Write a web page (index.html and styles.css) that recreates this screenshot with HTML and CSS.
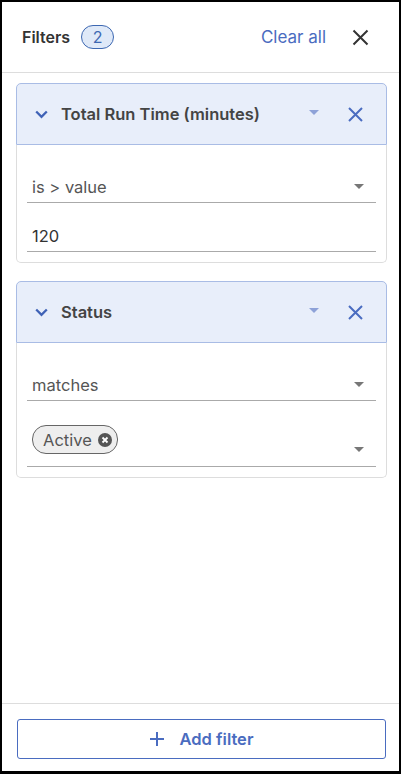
FILE: index.html
```html
<!DOCTYPE html>
<html lang="en">
<head>
    <meta charset="UTF-8">
    <meta name="viewport" content="width=device-width, initial-scale=1.0">
    <title>Filters</title>
    <link rel="stylesheet" href="styles.css">
</head>
<body>
    <div class="panel">
        <header class="panel-header">
            <h2 class="panel-title">Filters</h2>
            <span class="count-badge">2</span>
            <button class="clear-all">Clear all</button>
            <button class="close-panel" aria-label="Close">
                <svg width="17" height="17" viewBox="0 0 17 17"><path d="M1.5 1.5 L15.5 15.5 M15.5 1.5 L1.5 15.5" stroke="#333" stroke-width="2" fill="none"/></svg>
            </button>
        </header>

        <main class="filter-list">
            <section class="filter-card">
                <div class="card-head">
                    <svg class="chevron" width="13" height="9" viewBox="0 0 13 9"><path d="M1.2 1.5 L6.5 6.8 L11.8 1.5" stroke="#3f62b6" stroke-width="2.3" fill="none"/></svg>
                    <span class="card-title">Total Run Time (minutes)</span>
                    <span class="head-caret"></span>
                    <button class="remove-filter" aria-label="Remove">
                        <svg width="15" height="15" viewBox="0 0 15 15"><path d="M1 1 L14 14 M14 1 L1 14" stroke="#4a6cc0" stroke-width="2" fill="none"/></svg>
                    </button>
                </div>
                <div class="card-body">
                    <div class="field select">
                        <span class="field-value">is &gt; value</span>
                        <span class="caret"></span>
                    </div>
                    <div class="field">
                        <span class="field-value dark">120</span>
                    </div>
                </div>
            </section>

            <section class="filter-card">
                <div class="card-head">
                    <svg class="chevron" width="13" height="9" viewBox="0 0 13 9"><path d="M1.2 1.5 L6.5 6.8 L11.8 1.5" stroke="#3f62b6" stroke-width="2.3" fill="none"/></svg>
                    <span class="card-title">Status</span>
                    <span class="head-caret"></span>
                    <button class="remove-filter" aria-label="Remove">
                        <svg width="15" height="15" viewBox="0 0 15 15"><path d="M1 1 L14 14 M14 1 L1 14" stroke="#4a6cc0" stroke-width="2" fill="none"/></svg>
                    </button>
                </div>
                <div class="card-body">
                    <div class="field select">
                        <span class="field-value">matches</span>
                        <span class="caret"></span>
                    </div>
                    <div class="field select tags">
                        <span class="chip">
                            Active
                            <svg width="14" height="14" viewBox="0 0 14 14"><circle cx="7" cy="7" r="7" fill="#555"/><path d="M4.5 4.5 L9.5 9.5 M9.5 4.5 L4.5 9.5" stroke="#fff" stroke-width="1.8"/></svg>
                        </span>
                        <span class="caret low"></span>
                    </div>
                </div>
            </section>
        </main>

        <footer class="panel-footer">
            <button class="add-filter">
                <svg width="14" height="14" viewBox="0 0 14 14"><path d="M7 0 V14 M0 7 H14" stroke="#4a6cc0" stroke-width="2" fill="none"/></svg>
                <span>Add filter</span>
            </button>
        </footer>
    </div>
</body>
</html>
```

FILE: styles.css
```css
* {
    box-sizing: border-box;
    margin: 0;
    padding: 0;
}

body {
    background-color: #fff;
    font-family: 'Inter', 'Noto Sans', sans-serif;
    color: #444;
}

button {
    background: none;
    border: none;
    cursor: pointer;
    font-family: inherit;
}

.panel {
    border: 2px solid #000;
    border-bottom-width: 3px;
    display: flex;
    flex-direction: column;
    height: 774px;
    width: 401px;
}

.panel-header {
    align-items: center;
    border-bottom: 1px solid #ddd;
    display: flex;
    height: 71px;
    padding: 0 30px 0 20px;
}

.panel-title {
    color: #333;
    font-size: 16px;
    font-weight: 600;
}

.count-badge {
    background-color: #dfe9f8;
    border: 1px solid #3d68b2;
    border-radius: 12px;
    color: #3d68b2;
    font-size: 16px;
    height: 24px;
    line-height: 22px;
    margin-left: 11px;
    text-align: center;
    width: 33px;
}

.clear-all {
    color: #4a6cc0;
    font-size: 17px;
    margin-left: auto;
}

.close-panel {
    display: flex;
    margin-left: 26px;
}

.filter-list {
    display: flex;
    flex: 1;
    flex-direction: column;
    gap: 18px;
    padding: 10px 12px 0 14px;
}

.filter-card {
    border-radius: 5px;
}

.card-head {
    align-items: center;
    background-color: #e8eefa;
    border: 1px solid #a9bce5;
    border-radius: 5px 5px 0 0;
    display: flex;
    height: 62px;
    padding: 0 23px 0 18px;
}

.chevron {
    margin-right: 13px;
}

.card-title {
    color: #444;
    font-size: 16.5px;
    font-weight: 600;
}

.head-caret {
    border-left: 5px solid transparent;
    border-right: 5px solid transparent;
    border-top: 5px solid #8ea2d8;
    margin-left: auto;
    margin-top: -4px;
}

.remove-filter {
    display: flex;
    margin-left: 29px;
}

.card-body {
    border: 1px solid #ddd;
    border-radius: 0 0 5px 5px;
    border-top: none;
    display: flex;
    flex-direction: column;
    gap: 17px;
    padding: 26px 10px 10px;
}

.field {
    align-items: center;
    border-bottom: 1px solid #aaa;
    display: flex;
    height: 32px;
    padding: 0 12px 0 5px;
}

.field-value {
    color: #555;
    font-size: 16.5px;
}

.field-value.dark {
    color: #333;
}

.caret {
    border-left: 5px solid transparent;
    border-right: 5px solid transparent;
    border-top: 5px solid #777;
    margin-left: auto;
}

.field.tags {
    align-items: flex-start;
    height: 49px;
    padding-top: 7px;
}

.caret.low {
    margin-top: 22px;
}

.chip {
    align-items: center;
    background-color: #eee;
    border: 1px solid #666;
    border-radius: 14px;
    color: #555;
    display: flex;
    font-size: 16.5px;
    gap: 6px;
    height: 29px;
    padding: 0 5px 0 10px;
}

.panel-footer {
    border-top: 1px solid #ddd;
    padding: 15px 13px 12px 15px;
}

.add-filter {
    align-items: center;
    border: 1px solid #4a6cc0;
    border-radius: 3px;
    color: #4a6cc0;
    display: flex;
    font-size: 16.5px;
    font-weight: 600;
    gap: 16px;
    height: 40px;
    justify-content: center;
    width: 100%;
}
```
